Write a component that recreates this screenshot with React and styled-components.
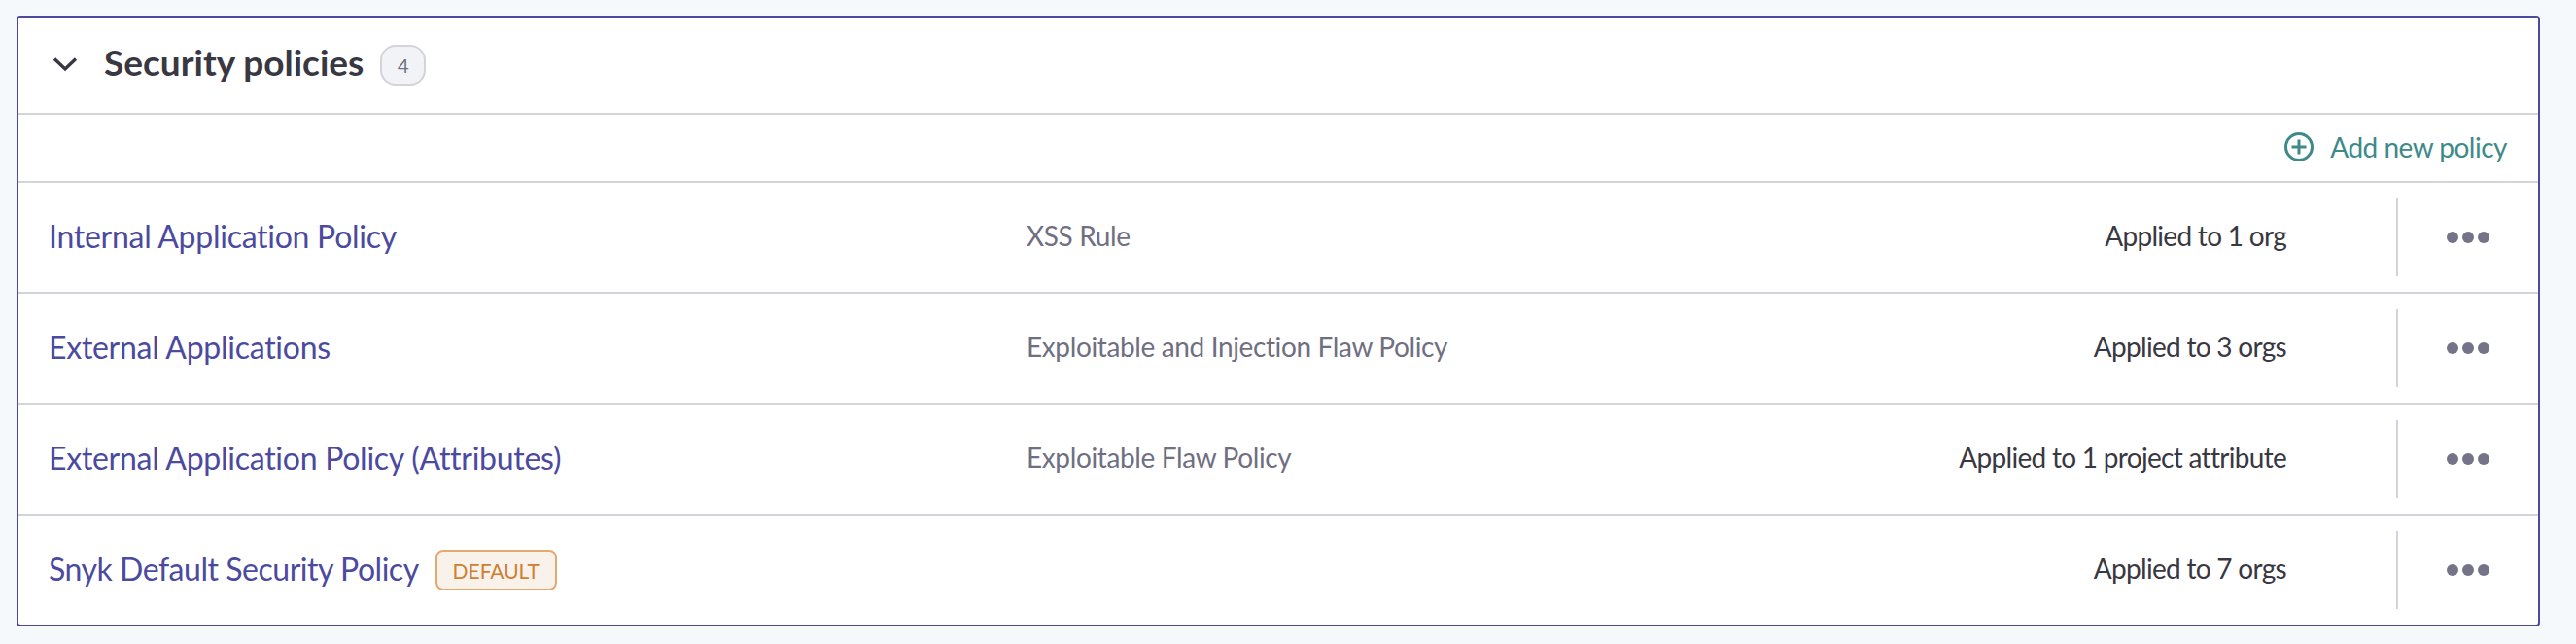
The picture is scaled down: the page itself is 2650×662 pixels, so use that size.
import React from "react";
import styled, { createGlobalStyle } from "styled-components";

const Global = createGlobalStyle`
  html, body { margin: 0; padding: 0; background: #f5f9fc; }
  body { font-family: "Lato", "Liberation Sans", sans-serif; }
`;
const Page = styled.div`
  padding: 16px 37px 18px 17px;
  background: #f5f9fc;
`;
const Card = styled.section`
  box-sizing: border-box;
  width: 2596px;
  height: 628px;
  background: #fff;
  border: 2px solid #4b4a9e;
  border-radius: 4px;
  display: flex;
  flex-direction: column;
`;
const Header = styled.header`
  box-sizing: border-box;
  height: 100px;
  flex: none;
  display: flex;
  align-items: center;
  padding: 0 0 4px 35px;
  border-bottom: 2px solid #d3d3d9;
`;
const Chevron = styled.svg`
  width: 26px;
  height: 16px;
  margin-right: 27px;
  margin-top: 2px;
  flex: none;
`;
const Title = styled.h2`
  margin: 0;
  font-size: 37px;
  font-weight: 700;
  color: #393842;
  line-height: 44px;
  padding-bottom: 3px;
`;
const Count = styled.span`
  box-sizing: border-box;
  margin-left: 17px;
  margin-top: 4px;
  width: 47px;
  height: 42px;
  border: 2px solid #d3d3d9;
  border-radius: 16px;
  background: #f2f3f6;
  color: #706f82;
  font-size: 20px;
  display: flex;
  align-items: center;
  justify-content: center;
`;
const Toolbar = styled.div`
  box-sizing: border-box;
  height: 70px;
  flex: none;
  display: flex;
  align-items: center;
  justify-content: flex-end;
  padding-right: 32px;
  border-bottom: 2px solid #d3d3d9;
`;
const AddLink = styled.a`
  display: flex;
  align-items: center;
  gap: 16px;
  color: #3d8a88;
  font-size: 28px;
  letter-spacing: -0.5px;
  padding-bottom: 2px;
`;
const AddIcon = styled.svg`
  width: 32px;
  height: 32px;
  flex: none;
`;
const Row = styled.div`
  box-sizing: border-box;
  height: ${(p) => (p.$last ? "112px" : "114px")};
  flex: none;
  display: grid;
  grid-template-columns: 1005px 1fr auto 146px;
  align-items: center;
  padding-left: 31px;
  border-bottom: ${(p) => (p.$last ? "none" : "2px solid #d3d3d9")};
`;
const NameCell = styled.div`
  display: flex;
  align-items: center;
  gap: 17px;
`;
const Name = styled.a`
  color: #4b4a9e;
  font-size: 32px;
  letter-spacing: ${(p) => (p.$tight ? "-0.47px" : "-0.27px")};
  padding-bottom: 4px;
`;
const Badge = styled.span`
  box-sizing: border-box;
  width: 125px;
  height: 42px;
  border: 2px solid #e4a96e;
  border-radius: 8px;
  background: #f9f2ea;
  color: #d07f2f;
  font-size: 21px;
  display: flex;
  align-items: center;
  justify-content: center;
`;
const Rule = styled.span`
  color: #706f82;
  font-size: 28px;
  letter-spacing: -0.37px;
  padding-bottom: 4px;
  margin-left: 1px;
`;
const Applied = styled.span`
  color: #393842;
  font-size: 28px;
  letter-spacing: -0.7px;
  padding-bottom: 4px;
  margin-right: 113px;
`;
const Actions = styled.div`
  box-sizing: border-box;
  height: 80px;
  border-left: 2px solid #d3d3d9;
  display: flex;
  align-items: center;
  justify-content: center;
  gap: 4px;
`;
const Dot = styled.i`
  width: 12px;
  height: 12px;
  border-radius: 50%;
  background: #757387;
`;

const rows = [
  { name: "Internal Application Policy", rule: "XSS Rule", applied: "Applied to 1 org" },
  { name: "External Applications", rule: "Exploitable and Injection Flaw Policy", applied: "Applied to 3 orgs" },
  { name: "External Application Policy (Attributes)", rule: "Exploitable Flaw Policy", applied: "Applied to 1 project attribute" },
  { name: "Snyk Default Security Policy", badge: "DEFAULT", applied: "Applied to 7 orgs" },
];

export default function App() {
  return (
    <Page>
      <Global />
      <Card>
        <Header>
          <Chevron viewBox="0 0 26 16" fill="none" stroke="#393842" strokeWidth="3.4">
            <path d="M2 2.5 L13 13 L24 2.5" />
          </Chevron>
          <Title>Security policies</Title>
          <Count>4</Count>
        </Header>
        <Toolbar>
          <AddLink>
            <AddIcon viewBox="0 0 32 32" fill="none" stroke="#3d8a88" strokeWidth="3">
              <circle cx="16" cy="16" r="13.5" />
              <path d="M16 8.5 V23.5 M8.5 16 H23.5" />
            </AddIcon>
            Add new policy
          </AddLink>
        </Toolbar>
        {rows.map((r, i) => (
          <Row key={r.name} $last={i === rows.length - 1}>
            <NameCell>
              <Name $tight={!!r.badge}>{r.name}</Name>
              {r.badge && <Badge>{r.badge}</Badge>}
            </NameCell>
            <Rule>{r.rule}</Rule>
            <Applied>{r.applied}</Applied>
            <Actions>
              <Dot />
              <Dot />
              <Dot />
            </Actions>
          </Row>
        ))}
      </Card>
    </Page>
  );
}
